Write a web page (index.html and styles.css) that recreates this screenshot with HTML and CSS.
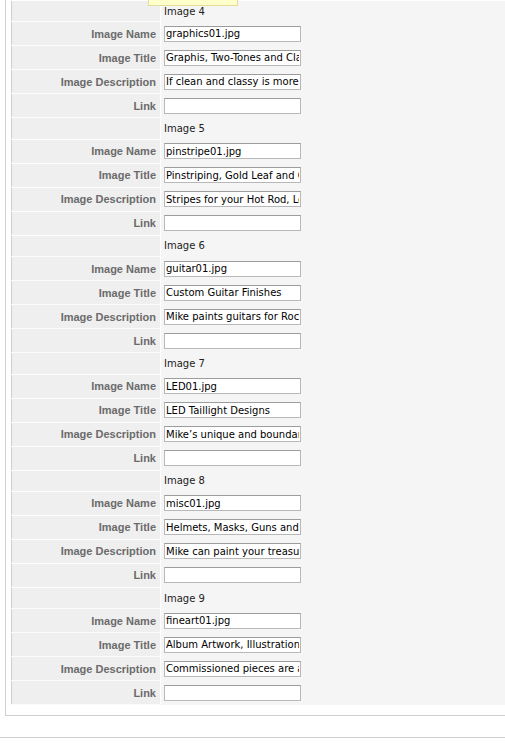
FILE: index.html
```html
<!DOCTYPE html>
<html lang="en">
<head>
    <meta charset="UTF-8">
    <title>Gallery Images</title>
    <link rel="stylesheet" href="styles.css">
</head>
<body>
    <div class="tip"></div>

    <div class="panel">
        <table class="fields">
            <tr class="group"><td class="label"></td><td class="value">Image 4</td></tr>
            <tr><td class="label">Image Name</td><td class="value"><input type="text" value="graphics01.jpg"></td></tr>
            <tr><td class="label">Image Title</td><td class="value"><input type="text" value="Graphis, Two-Tones and Classic Flames"></td></tr>
            <tr><td class="label">Image Description</td><td class="value"><input type="text" value="If clean and classy is more your style"></td></tr>
            <tr><td class="label">Link</td><td class="value"><input type="text" value=""></td></tr>

            <tr class="group"><td class="label"></td><td class="value">Image 5</td></tr>
            <tr><td class="label">Image Name</td><td class="value"><input type="text" value="pinstripe01.jpg"></td></tr>
            <tr><td class="label">Image Title</td><td class="value"><input type="text" value="Pinstriping, Gold Leaf and Custom Lettering"></td></tr>
            <tr><td class="label">Image Description</td><td class="value"><input type="text" value="Stripes for your Hot Rod, Lead Sled or Bike"></td></tr>
            <tr><td class="label">Link</td><td class="value"><input type="text" value=""></td></tr>

            <tr class="group"><td class="label"></td><td class="value">Image 6</td></tr>
            <tr><td class="label">Image Name</td><td class="value"><input type="text" value="guitar01.jpg"></td></tr>
            <tr><td class="label">Image Title</td><td class="value"><input type="text" value="Custom Guitar Finishes"></td></tr>
            <tr><td class="label">Image Description</td><td class="value"><input type="text" value="Mike paints guitars for Rock Stars and weekend players"></td></tr>
            <tr><td class="label">Link</td><td class="value"><input type="text" value=""></td></tr>

            <tr class="group"><td class="label"></td><td class="value">Image 7</td></tr>
            <tr><td class="label">Image Name</td><td class="value"><input type="text" value="LED01.jpg"></td></tr>
            <tr><td class="label">Image Title</td><td class="value"><input type="text" value="LED Taillight Designs"></td></tr>
            <tr><td class="label">Image Description</td><td class="value"><input type="text" value="Mike&#8217;s unique and boundary pushing designs"></td></tr>
            <tr><td class="label">Link</td><td class="value"><input type="text" value=""></td></tr>

            <tr class="group"><td class="label"></td><td class="value">Image 8</td></tr>
            <tr><td class="label">Image Name</td><td class="value"><input type="text" value="misc01.jpg"></td></tr>
            <tr><td class="label">Image Title</td><td class="value"><input type="text" value="Helmets, Masks, Guns and Whatever"></td></tr>
            <tr><td class="label">Image Description</td><td class="value"><input type="text" value="Mike can paint your treasured possessions"></td></tr>
            <tr><td class="label">Link</td><td class="value"><input type="text" value=""></td></tr>

            <tr class="group"><td class="label"></td><td class="value">Image 9</td></tr>
            <tr><td class="label">Image Name</td><td class="value"><input type="text" value="fineart01.jpg"></td></tr>
            <tr><td class="label">Image Title</td><td class="value"><input type="text" value="Album Artwork, Illustration and Fine Art"></td></tr>
            <tr><td class="label">Image Description</td><td class="value"><input type="text" value="Commissioned pieces are always welcome"></td></tr>
            <tr><td class="label">Link</td><td class="value"><input type="text" value=""></td></tr>
        </table>
    </div>

    <div class="rule"></div>
</body>
</html>
```

FILE: styles.css
```css
body {
    margin: 0;
    padding: 0;
    background-color: #fff;
    font-family: "DejaVu Sans", sans-serif;
    font-size: 10px;
    color: #222;
    overflow: hidden;
}

/* tooltip left over from the row above */
.tip {
    position: absolute;
    left: 148px;
    top: 0;
    width: 88px;
    height: 5px;
    background-color: #ffffcc;
    border: 1px solid #e6dc9a;
    border-top: none;
}

.panel {
    width: 620px;
    margin-left: 5px;
    padding: 1px 5px 10px;
    border: 1px solid #d0d0d0;
    border-top: none;
}

.fields {
    width: 100%;
    border-collapse: collapse;
    border: 1px solid #cfcfcf;
    border-top: none;
    background-color: #f5f5f5;
}

.fields td {
    padding: 0;
    height: 23px;
    vertical-align: middle;
}

.fields .group td {
    height: 20.4px;
}

.label {
    width: 144px;
    padding-right: 4px !important;
    text-align: right;
    font-family: "Liberation Sans", Arial, sans-serif;
    font-size: 11px;
    font-weight: bold;
    color: #6b6b6b;
    background-color: #efefef;
    border-bottom: 1px solid #fbfbfb;
    border-right: 1px solid #fff;
}

.value {
    padding-left: 3px !important;
    border-bottom: 1px solid #f5f5f5;
}

.value input {
    display: block;
    box-sizing: border-box;
    width: 137px;
    height: 16px;
    margin: 0;
    padding: 0 1px;
    border: 1px solid #b8b8b8;
    border-top-color: #9c9c9c;
    background-color: #fff;
    font-family: "DejaVu Sans", sans-serif;
    font-size: 10px;
    color: #000;
    outline: none;
}

.rule {
    margin-top: 21px;
    border-top: 1px solid #d0d0d0;
}
```
